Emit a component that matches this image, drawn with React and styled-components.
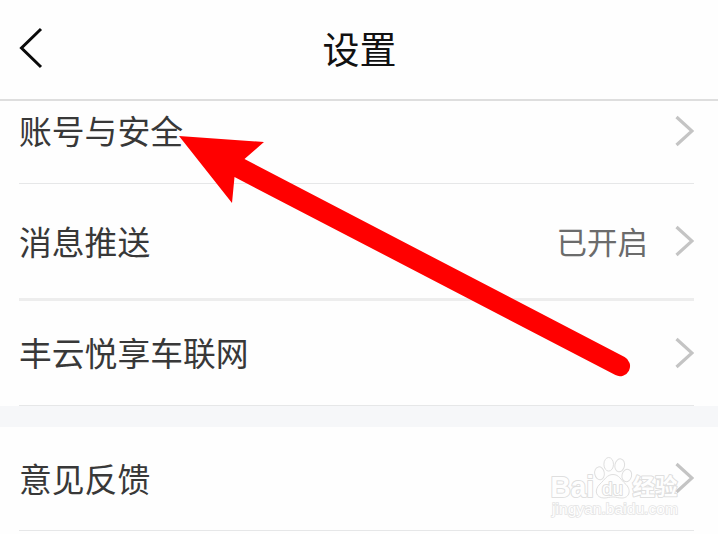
import React from 'react';
import styled, { createGlobalStyle } from 'styled-components';

const GlobalStyle = createGlobalStyle`
  * {
    box-sizing: border-box;
  }

  body {
    margin: 0;
    background: #fefefe;
    font-family: "Noto Sans CJK SC", sans-serif;
    overflow: hidden;
  }
`;

const Screen = styled.div`
  position: relative;
  width: 718px;
  height: 534px;
  display: flex;
  flex-direction: column;
  background: #fefefe;
  overflow: hidden;
`;

const Header = styled.header`
  flex-shrink: 0;
  height: 101px;
  display: grid;
  grid-template-columns: 60px 1fr 60px;
  align-items: center;
  border-bottom: 2px solid #dedede;
`;

const BackButton = styled.button`
  display: flex;
  justify-self: start;
  margin: 0 0 3px;
  padding: 0 0 0 19px;
  border: none;
  background: none;
  color: #0a0a0a;
`;

const Title = styled.h1`
  margin: 0 0 3px;
  padding-left: 1px;
  font-size: 37px;
  font-weight: 400;
  line-height: 54px;
  text-align: center;
  color: #111;
`;

const List = styled.main`
  flex: 1;
  overflow: hidden;
`;

const Group = styled.section`
  padding: 0 24px 0 19px;
  margin-top: ${props => props.$scrolled || 0}px;
`;

const Divider = styled.div`
  height: 21px;
  background: #f6f7f9;
`;

const Row = styled.div`
  display: flex;
  align-items: center;
  height: ${props => props.$height}px;
  border-bottom: ${props => (props.$thick ? '3px solid #ededed' : '1px solid #e6e7e8')};
`;

const Label = styled.span`
  flex: 1;
  padding-bottom: ${props => (props.$thick ? 0 : 2)}px;
  font-size: 32.8px;
  line-height: 48px;
  color: #383838;
`;

const Value = styled.span`
  margin-right: 27px;
  font-size: 30.5px;
  line-height: 44px;
  color: #6b6b6b;
`;

const Chevron = styled.svg`
  display: block;
  flex-shrink: 0;
  margin-bottom: 1px;
`;

const Pointer = styled.svg`
  position: absolute;
  top: 0;
  left: 0;
`;

const Watermark = styled.svg`
  position: absolute;
  left: 545px;
  top: 452px;
`;

const ChevronRight = () => (
  <Chevron width="19" height="32" viewBox="0 0 19 32" fill="none">
    <path d="M1.5 2 L17 16 L1.5 30" stroke="#c4c4c4" strokeWidth="3.2" />
  </Chevron>
);

const SettingRow = ({ label, value, height, thick }) => (
  <Row $height={height} $thick={thick}>
    <Label $thick={thick}>{label}</Label>
    {value && <Value>{value}</Value>}
    <ChevronRight />
  </Row>
);

const BaiduWatermark = () => (
  <Watermark width="140" height="72" viewBox="0 0 140 72">
    <g fill="#fefefe" stroke="#dfdfdf" strokeWidth="1">
      <ellipse cx="54.5" cy="21.3" rx="4.8" ry="6.5" transform="rotate(-10 54.5 21.3)" />
      <ellipse cx="63.7" cy="12.3" rx="4.8" ry="6.8" />
      <ellipse cx="74.7" cy="13.3" rx="4.8" ry="6.5" transform="rotate(12 74.7 13.3)" />
      <ellipse cx="81.8" cy="23.5" rx="4.8" ry="6.2" transform="rotate(14 81.8 23.5)" />
      <path d="M68 22.5 C74 22.5 76 28 80 31.5 C87 37.5 84.5 46 77 46 C73 46 71.5 45 68 45 C64.5 45 62 46 59 46 C51 46 48.5 38 55 32 C60 27.5 62 22.5 68 22.5z" />
    </g>
    <g fill="#fefefe" stroke="#dfdfdf" strokeWidth="2" strokeLinejoin="round" paintOrder="stroke" fontWeight="700">
      <text x="5.5" y="45" fontFamily="Liberation Sans" fontSize="29" textLength="43.5" lengthAdjust="spacingAndGlyphs">Bai</text>
      <text x="57" y="43" fontFamily="Liberation Sans" fontSize="18.5" fontWeight="400" textLength="21" lengthAdjust="spacingAndGlyphs">du</text>
      <text x="87.5" y="43" fontFamily="Noto Sans CJK SC" fontSize="22.5">经验</text>
    </g>
    <text x="7" y="62" fontFamily="Liberation Sans" fontSize="15" fill="#fefefe" stroke="#e4e4e4" strokeWidth="1.5" paintOrder="stroke" textLength="126" lengthAdjust="spacingAndGlyphs">jingyan.baidu.com</text>
  </Watermark>
);

const App = () => (
  <>
    <GlobalStyle />
    <Screen>
      <Header>
        <BackButton aria-label="返回">
          <svg width="24" height="42" viewBox="0 0 24 42" fill="none">
            <path d="M22 2 L2.5 21 L22 40" stroke="currentColor" strokeWidth="3" />
          </svg>
        </BackButton>
        <Title>设置</Title>
      </Header>

      <List>
        <Group $scrolled={-22}>
          <SettingRow label="账号与安全" height={105} />
          <SettingRow label="消息推送" value="已开启" height={117} thick />
          <SettingRow label="丰云悦享车联网" height={105} />
        </Group>
        <Divider />
        <Group>
          <SettingRow label="意见反馈" height={104} />
        </Group>
      </List>

      <BaiduWatermark />
      <Pointer width="718" height="534" viewBox="0 0 718 534">
        <path
          d="M179 136 L264 142 L244.5 159 L624.6 357.1 A10 10 0 0 1 615.4 375 L234.5 177 L232 203z"
          fill="#ff0000"
        />
      </Pointer>
    </Screen>
  </>
);

export default App;
